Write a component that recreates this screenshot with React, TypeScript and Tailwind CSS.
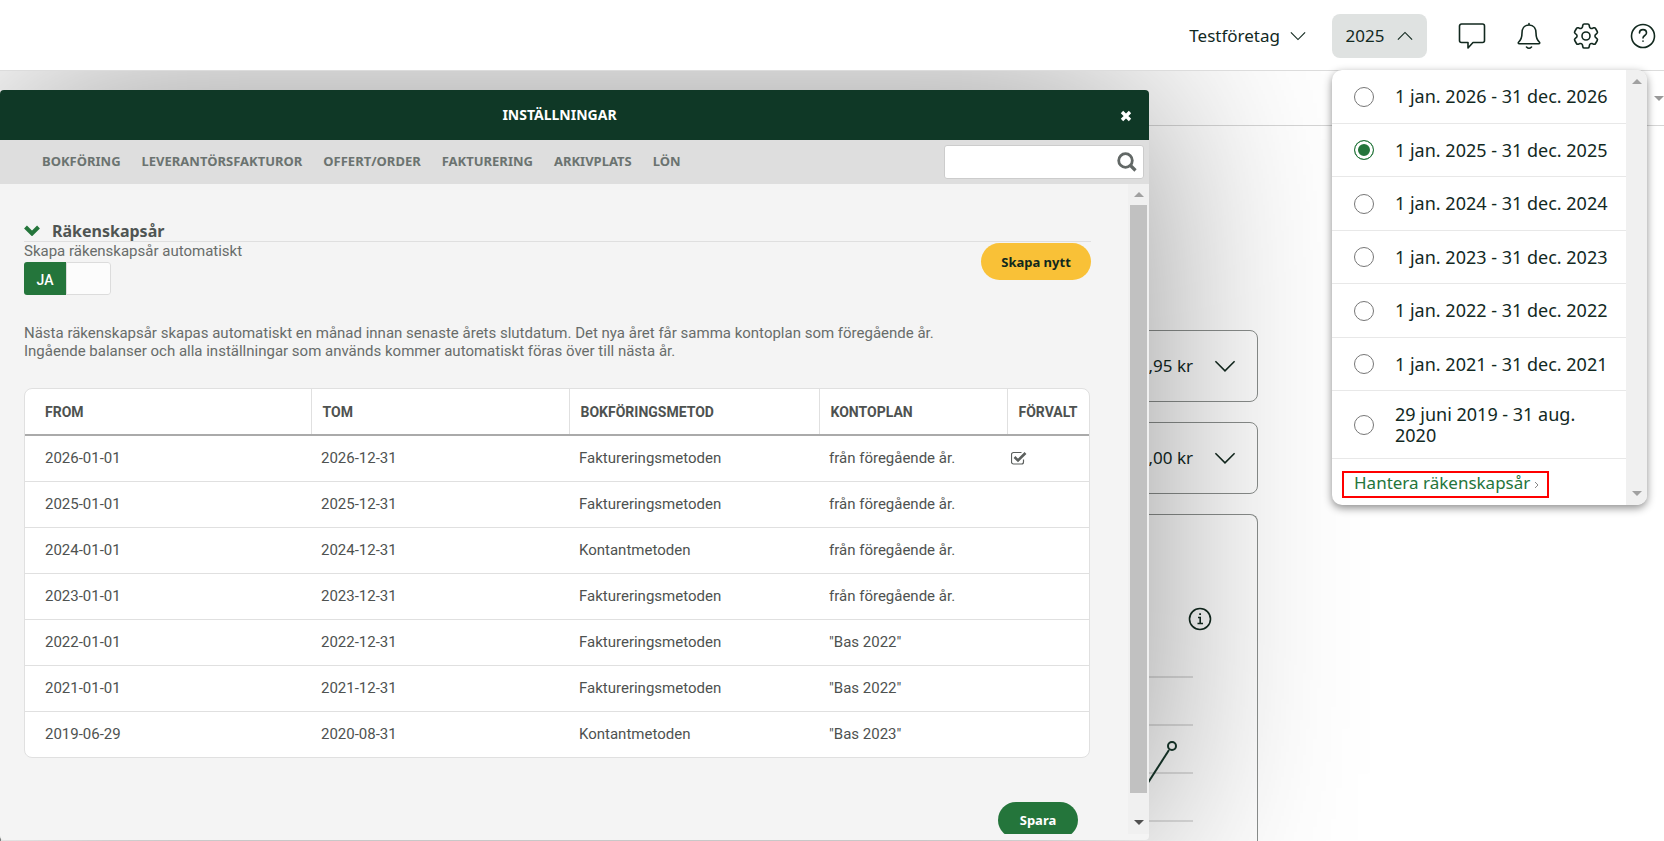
import type { ReactNode } from 'react';
import { HiOutlineCog6Tooth } from 'react-icons/hi2';

const YEARS = [
  '1 jan. 2026 - 31 dec. 2026',
  '1 jan. 2025 - 31 dec. 2025',
  '1 jan. 2024 - 31 dec. 2024',
  '1 jan. 2023 - 31 dec. 2023',
  '1 jan. 2022 - 31 dec. 2022',
  '1 jan. 2021 - 31 dec. 2021',
  '29 juni 2019 - 31 aug. 2020',
];

const TABS = ['BOKFÖRING', 'LEVERANTÖRSFAKTUROR', 'OFFERT/ORDER', 'FAKTURERING', 'ARKIVPLATS', 'LÖN'];

const ROWS = [
  { from: '2026-01-01', tom: '2026-12-31', metod: 'Faktureringsmetoden', plan: 'från föregående år.', forvalt: true },
  { from: '2025-01-01', tom: '2025-12-31', metod: 'Faktureringsmetoden', plan: 'från föregående år.' },
  { from: '2024-01-01', tom: '2024-12-31', metod: 'Kontantmetoden', plan: 'från föregående år.' },
  { from: '2023-01-01', tom: '2023-12-31', metod: 'Faktureringsmetoden', plan: 'från föregående år.' },
  { from: '2022-01-01', tom: '2022-12-31', metod: 'Faktureringsmetoden', plan: '"Bas 2022"' },
  { from: '2021-01-01', tom: '2021-12-31', metod: 'Faktureringsmetoden', plan: '"Bas 2022"' },
  { from: '2019-06-29', tom: '2020-08-31', metod: 'Kontantmetoden', plan: '"Bas 2023"' },
];

function Chevron({ className, up }: { className: string; up?: boolean }) {
  return (
    <svg className={className} viewBox="0 0 18 10" fill="none" stroke="currentColor" strokeWidth="1.3">
      <path d={up ? 'M1 9 9 1l8 8' : 'M1 1l8 8 8-8'} />
    </svg>
  );
}

function Triangle({ className, up }: { className: string; up?: boolean }) {
  return (
    <svg className={className} viewBox="0 0 10 5" fill="currentColor">
      <path d={up ? 'M5 0l5 5H0z' : 'M0 0h10L5 5z'} />
    </svg>
  );
}

function IconButton({ label, children }: { label: string; children: ReactNode }) {
  return (
    <button aria-label={label} className="flex size-7 shrink-0 items-center justify-center">
      {children}
    </button>
  );
}

function LineIcon({ children }: { children: ReactNode }) {
  return (
    <svg className="size-7" viewBox="0 0 28 28" fill="none" stroke="currentColor" strokeWidth="1.6" strokeLinejoin="round" strokeLinecap="round">
      {children}
    </svg>
  );
}

function YearMenu() {
  return (
    <div className="absolute top-[70px] right-[17px] z-30 flex h-[435px] w-[315px] overflow-hidden rounded-[10px] bg-white shadow-[0_3px_8px_rgba(0,0,0,0.45)]">
      <div className="flex flex-1 flex-col text-[#12291f]">
        {YEARS.map((year, i) => (
          <label
            key={year}
            className="flex flex-auto items-center gap-[21px] border-b border-[#e8e8e8] pt-px pr-3 pl-[22px] text-[18px] leading-[21px] nth-7:h-[68px] nth-7:flex-none nth-7:pr-8"
          >
            <input
              type="radio"
              name="year"
              defaultChecked={i === 1}
              className="size-5 shrink-0 appearance-none rounded-full border border-[#777] bg-white checked:border-[#24753b] checked:bg-[#24753b] checked:shadow-[inset_0_0_0_3px_white]"
            />
            {year}
          </label>
        ))}
        <div className="h-[46px] shrink-0 px-[10px] pt-3">
          <a href="#" className="flex h-[27px] w-[207px] items-center gap-[5px] border-2 border-[#f00] pb-1 pl-[10px] text-[17px] text-[#24753b]">
            Hantera räkenskapsår
            <svg className="mt-1 h-2 w-1 text-[#888]" viewBox="0 0 4 8" fill="none" stroke="currentColor">
              <path d="M0 1l3 3-3 3" />
            </svg>
          </a>
        </div>
      </div>
      <div className="flex w-[21px] flex-col items-center justify-between bg-[#f0f0f0] py-[9px] text-[#a0a0a0]">
        <Triangle up className="h-[5px] w-[10px]" />
        <Triangle className="h-[5px] w-[10px]" />
      </div>
    </div>
  );
}

function AmountCard({ amount }: { amount: string }) {
  return (
    <div className="flex h-[72px] items-center justify-end gap-5 rounded-lg border border-[#8b8f8d] pr-5 text-[17px]">
      {amount}
      <Chevron className="h-3 w-6" />
    </div>
  );
}

function Dashboard() {
  return (
    <div className="flex flex-1 flex-col">
      <div className="flex h-[55px] shrink-0 items-start justify-end border-b border-[#d5d5d5] pt-[25px] text-[#999]">
        <Triangle className="h-[5px] w-[10px]" />
      </div>
      <div className="mt-[204px] mr-[406px] flex flex-1 flex-col gap-5">
        <AmountCard amount="4 214,95 kr" />
        <AmountCard amount="1 250,00 kr" />
        <div className="flex flex-1 flex-col items-end rounded-t-lg border border-b-0 border-[#8b8f8d] pt-[92px]">
          <svg className="mr-[45px] size-6" viewBox="0 0 24 24" fill="none" stroke="currentColor" strokeWidth="1.6">
            <circle cx="12" cy="12" r="10.5" />
            <path d="M10 10.5h2.2v6M9.5 16.5h5.5" />
            <path d="M11.2 6.2h1.8v1.9h-1.8z" fill="currentColor" stroke="none" />
          </svg>
          <svg className="mt-11 mr-16 h-[160px] w-[200px]" viewBox="0 0 200 160" fill="none">
            <path d="M0 2h200M0 50h200M0 98h200M0 146h200" stroke="#e0e0e0" strokeWidth="2" />
            <path d="M108 181 176 75" stroke="#17372b" strokeWidth="2" />
            <circle cx="179" cy="71" r="4" stroke="#17372b" strokeWidth="2" />
          </svg>
        </div>
      </div>
    </div>
  );
}

function YearTable() {
  const th = 'border-l border-[#e0e0e0] pl-[11px] text-left font-bold first:border-l-0 first:pl-5';
  const td = 'pl-[10px] first:pl-5';
  return (
    <div className="mt-7 mr-px overflow-hidden rounded-lg border border-[#e0e0e0] bg-white text-[#4e5250]">
      <table className="w-full table-fixed border-collapse">
        <colgroup>
          <col className="w-[286px]" />
          <col className="w-[258px]" />
          <col className="w-[250px]" />
          <col className="w-[188px]" />
          <col />
        </colgroup>
        <thead>
          <tr className="h-[46px] border-b-2 border-[#aaa] text-[14px]">
            <th className={th}>FROM</th>
            <th className={th}>TOM</th>
            <th className={th}>BOKFÖRINGSMETOD</th>
            <th className={th}>KONTOPLAN</th>
            <th className={th}>FÖRVALT</th>
          </tr>
        </thead>
        <tbody className="text-[15px]">
          {ROWS.map((row) => (
            <tr key={row.from} className="h-[46px] border-b border-[#e0e0e0] last:border-b-0">
              <td className={td}>{row.from}</td>
              <td className={td}>{row.tom}</td>
              <td className={td}>{row.metod}</td>
              <td className={td}>{row.plan}</td>
              <td className="pl-1">
                {row.forvalt && (
                  <svg className="h-[14px] w-4" viewBox="0 0 16 14" fill="none" stroke="#5c605e" role="img" aria-label="Förvalt">
                    <path d="M12.5 8.5V11a2 2 0 0 1-2 2h-8a2 2 0 0 1-2-2V3.5a2 2 0 0 1 2-2h8" strokeWidth="1.2" />
                    <path d="M3.5 6l3.5 3.5L14.5 2" strokeWidth="2.6" />
                  </svg>
                )}
              </td>
            </tr>
          ))}
        </tbody>
      </table>
    </div>
  );
}

function SettingsModal() {
  return (
    <section className="absolute top-[90px] right-[515px] bottom-px left-0 z-10 flex flex-col overflow-hidden rounded bg-[#f4f4f4] pb-[6px] shadow-[0_0_200px_rgba(0,0,0,0.43)]">
      <div className="relative flex h-[50px] shrink-0 items-center justify-center bg-[#0f3826] text-white">
        <h1 className="pr-[30px] pb-0.5 text-[14px] font-bold">INSTÄLLNINGAR</h1>
        <button aria-label="Stäng" className="absolute top-5 right-[17px]">
          <svg className="size-3" viewBox="0 0 12 12" stroke="currentColor" strokeWidth="3.4">
            <path d="M2 2l8 8M10 2l-8 8" />
          </svg>
        </button>
      </div>
      <nav className="flex h-11 shrink-0 items-center justify-between bg-[#dedede] pr-[5px] pl-[42px]">
        <div className="flex gap-[21px] text-[13px] font-bold text-[#6b7370]">
          {TABS.map((tab) => (
            <a key={tab} href="#">
              {tab}
            </a>
          ))}
        </div>
        <div className="flex h-[34px] w-[200px] items-center rounded-[3px] border border-[#ccc] bg-white pr-1.5">
          <input type="text" aria-label="Sök" className="h-full min-w-0 flex-1 px-2 outline-none" />
          <svg className="size-5" viewBox="0 0 20 20" fill="none" stroke="#626866" strokeWidth="2.8">
            <circle cx="8.5" cy="8.5" r="6.8" />
            <path d="M13.5 13.5l5 5" strokeWidth="3.2" />
          </svg>
        </div>
      </nav>

      <div className="flex min-h-0 flex-1">
        <div className="flex-1 overflow-hidden pt-9 pr-[37px] pl-6 font-[Roboto,sans-serif] text-[15px] leading-[18px] text-[#686c6a]">
          <h2 className="flex h-[22px] items-center gap-3 border-b border-[#dfdfdf] font-['Noto_Sans',sans-serif] text-[16px] font-bold text-[#4f5553]">
            <svg className="h-[11px] w-4" viewBox="0 0 16 11" fill="none" stroke="#24753b" strokeWidth="4">
              <path d="M1.5 2l6.5 6.5L14.5 2" />
            </svg>
            Räkenskapsår
          </h2>
          <div className="flex items-start justify-between">
            <div>
              <div>Skapa räkenskapsår automatiskt</div>
              <button className="mt-0.5 flex h-[33px] w-[87px] overflow-hidden rounded-[3px] text-[14px] font-medium text-white">
                <span className="flex h-full w-[42px] items-center justify-center bg-[#24753b] pt-0.5">JA</span>
                <span className="h-full flex-1 rounded-r-[3px] border border-[#dcdcdc] bg-[#fcfcfc]" />
              </button>
            </div>
            <button className="mt-px h-[37px] w-[110px] rounded-full bg-[#f9c137] font-['Noto_Sans',sans-serif] text-[13px] font-bold text-[#10281d]">
              Skapa nytt
            </button>
          </div>
          <p className="mt-[29px]">
            Nästa räkenskapsår skapas automatiskt en månad innan senaste årets slutdatum. Det nya året får samma kontoplan som föregående år.
            <br />
            Ingående balanser och alla inställningar som används kommer automatiskt föras över till nästa år.
          </p>
          <YearTable />
          <div className="mt-11 flex justify-end pr-[13px]">
            <button className="h-9 w-20 rounded-full bg-[#24753b] font-['Noto_Sans',sans-serif] text-[13px] font-bold text-white">Spara</button>
          </div>
        </div>
        <div className="flex w-[21px] flex-col items-center bg-[#f0f0f0] text-[#a0a0a0]">
          <Triangle up className="my-2 h-[5px] w-[10px] shrink-0" />
          <div className="w-[17px] flex-1 bg-[#c1c1c1]" />
          <Triangle className="mt-[27px] mb-[9px] h-[5px] w-[10px] shrink-0 text-[#505050]" />
        </div>
      </div>
    </section>
  );
}

export default function App() {
  return (
    <div className="relative flex h-screen flex-col overflow-hidden bg-white font-['Noto_Sans',sans-serif] text-[#12291f]">
      <header className="z-20 flex h-[71px] shrink-0 items-center justify-end border-b border-[#dcdcdc] bg-white pt-px pr-[6px] text-[17px]">
        <button className="flex items-center gap-[10px]">
          Testföretag
          <Chevron className="h-[10px] w-4" />
        </button>
        <button className="mr-[31px] ml-[26px] flex h-11 w-[95px] items-center justify-center gap-[13px] rounded-lg bg-[#dfe2e1]">
          2025
          <Chevron up className="h-[10px] w-4" />
        </button>
        <div className="flex gap-[29px] pr-px">
          <IconButton label="Meddelanden">
            <LineIcon>
              <path d="M3.5 2h21a2 2 0 0 1 2 2v14.5a2 2 0 0 1-2 2H15l-5 5.5v-5.5H3.5a2 2 0 0 1-2-2V4a2 2 0 0 1 2-2z" />
            </LineIcon>
          </IconButton>
          <IconButton label="Aviseringar">
            <LineIcon>
              <path d="M14 1.5V3M14 3c-5 0-7 4-7 8 0 4.5-.6 6.5-3.3 9-.8.8-.4 1.8.6 1.8h19.4c1 0 1.4-1 .6-1.8C21.6 17.5 21 15.5 21 11c0-4-2-8-7-8zM11.500 25c1.500 1.500 3.500 1.500 5 0" />
            </LineIcon>
          </IconButton>
          <IconButton label="Inställningar">
            <HiOutlineCog6Tooth className="size-8 shrink-0" strokeWidth={1.2} />
          </IconButton>
          <IconButton label="Hjälp">
            <LineIcon>
              <circle cx="14" cy="14" r="11.5" />
              <path d="M10.5 11c0-4.5 7-4.5 7 0 0 2.5-3.5 2.5-3.5 5M14 19v.3" />
            </LineIcon>
          </IconButton>
        </div>
      </header>
      <Dashboard />
      <SettingsModal />
      <YearMenu />
    </div>
  );
}
